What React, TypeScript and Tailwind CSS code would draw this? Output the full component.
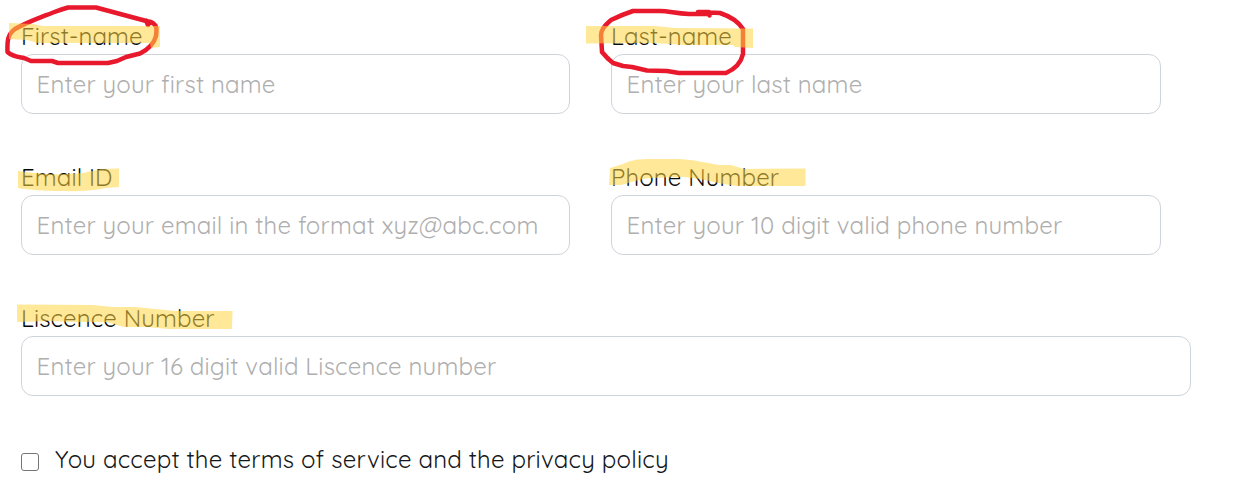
type FieldProps = {
  id: string;
  label: string;
  placeholder: string;
  className: string;
};

function Field({ id, label, placeholder, className }: FieldProps) {
  return (
    <div className={`flex flex-col ${className}`}>
      <label htmlFor={id} className="h-9 whitespace-nowrap leading-9 tracking-[0.12px] text-[#080a0c]">
        {label}
      </label>
      <input
        id={id}
        placeholder={placeholder}
        className="h-[60px] w-full rounded-xl border border-[#ced4da] bg-white pl-[14.6px] pr-[14px] tracking-[0.18px] placeholder:text-[#afafaf]"
      />
    </div>
  );
}

function Annotations() {
  return (
    <svg className="pointer-events-none absolute left-0 top-0" width="1238" height="493" viewBox="0 0 1238 493" fill="none" aria-hidden="true">
      <g stroke="#e8192c" strokeWidth="4.5" strokeLinecap="round" strokeLinejoin="round">
        <path d="M146 20.500L148 25L150 22L96 7.500L68 7.500C58 10 53 13 45 15.500C36 19 23 24 15 29C8 34 7 40 7.500 52C13 57 19 57 24 58L31 61L52 61L58 63L108 63L117 61L126 57L140 53.500C149 49 154 44 156 36C157 28 157 25 151 22L146 21" />
        <path d="M709.500 15.500L709 12L698 12M710 14L689 14C674 13 669 11 660 11L633 11C624 14 617 17 611 20C605 25 601 30 601 35L602 52C606 57 609 60 613 63L623 66L632 67L647 70.500L667 71L679 73L726 73C735 69 741 63 743 54L743 29C738 21 729 16 720 13L700 12" />
      </g>
      <g fill="#ffd541" fillOpacity="0.55">
        <path d="M9 23L33 24L43 26L160 26L160 47L151 48L150 43L38 43L27 40L9 39Z" />
        <path d="M586 26L655 26L675 28L753 28.500L753 48L735 47L733 45L684 45L655 43L586 43.500Z" />
        <path d="M18 171C34 173 49 175 65 174L83 173L101 169L119 168.500L119 187L106 188C91 191 76 191.500 61 191C43 191 30 190 18 188Z" />
        <path d="M610 168L623 164C636 158 645 159 658 159L679 159C696 160 707 163 719 165L731 165L744 169L805.500 168.500L805.500 186L737 186C717 184 699 177 680 177L650 178C637 179 628 184 620 185L609 185Z" />
        <path d="M17 304.500L93 305L112 307L135 307L160 309.500L175 311L232.500 311L232 329L169 329L147 327L124 327L106 322L76 322L50 321L17 322Z" />
      </g>
    </svg>
  );
}

export default function App() {
  return (
    <main className="relative h-[493px] w-full overflow-hidden bg-white font-['Quicksand','Lato',sans-serif] text-2xl">
      <form className="flex flex-col gap-[45px] pl-[21px] pt-[18px]">
        <div className="flex gap-[41px]">
          <Field id="first" label="First-name" placeholder="Enter your first name" className="w-[549px]" />
          <Field id="last" label="Last-name" placeholder="Enter your last name" className="w-[550px]" />
        </div>
        <div className="flex gap-[41px]">
          <Field id="email" label="Email ID" placeholder="Enter your email in the format xyz@abc.com" className="w-[549px]" />
          <Field id="phone" label="Phone Number" placeholder="Enter your 10 digit valid phone number" className="w-[550px]" />
        </div>
        <Field id="licence" label="Liscence Number" placeholder="Enter your 16 digit valid Liscence number" className="w-[1170px]" />
        <label className="flex h-9 items-center gap-4 whitespace-nowrap leading-9 tracking-[0.2px] text-[#15181b]">
          <input type="checkbox" className="mt-[6px] size-[18px] appearance-none rounded-[3px] border border-[#767676] bg-white" />
          You accept the terms of service and the privacy policy
        </label>
      </form>
      <Annotations />
    </main>
  );
}
